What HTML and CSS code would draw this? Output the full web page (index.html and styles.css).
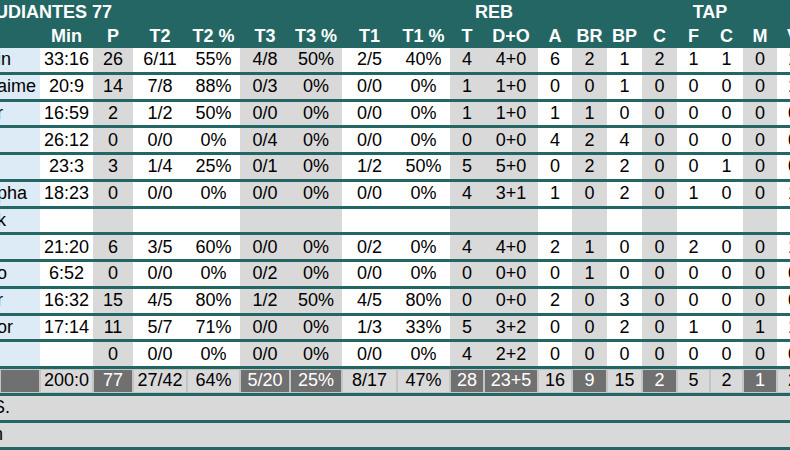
FILE: index.html
```html
<!DOCTYPE html>
<html>
<head>
<meta charset="utf-8">
<link rel="stylesheet" href="styles.css">
</head>
<body>
<div class="sheet">
  <div class="head">
    <div class="row top">
      <div class="team">ESTUDIANTES 77</div>
      <div class="grp reb">REB</div>
      <div class="grp tap">TAP</div>
    </div>
    <div class="row labels">
      <div></div><div>Min</div><div>P</div><div>T2</div><div>T2 %</div><div>T3</div><div>T3 %</div><div>T1</div><div>T1 %</div><div>T</div><div>D+O</div><div>A</div><div>BR</div><div>BP</div><div>C</div><div>F</div><div>C</div><div>M</div><div>V</div>
    </div>
  </div>

  <div class="row data"><div class="n">in</div><div>33:16</div><div>26</div><div>6/11</div><div>55%</div><div>4/8</div><div>50%</div><div>2/5</div><div>40%</div><div>4</div><div>4+0</div><div>6</div><div>2</div><div>1</div><div>2</div><div>1</div><div>1</div><div>0</div><div>1</div></div>
  <div class="row data"><div class="n">aime</div><div>20:9</div><div>14</div><div>7/8</div><div>88%</div><div>0/3</div><div>0%</div><div>0/0</div><div>0%</div><div>1</div><div>1+0</div><div>0</div><div>0</div><div>1</div><div>0</div><div>0</div><div>0</div><div>0</div><div>1</div></div>
  <div class="row data"><div class="n">r</div><div>16:59</div><div>2</div><div>1/2</div><div>50%</div><div>0/0</div><div>0%</div><div>0/0</div><div>0%</div><div>1</div><div>1+0</div><div>1</div><div>1</div><div>0</div><div>0</div><div>0</div><div>0</div><div>0</div><div>0</div></div>
  <div class="row data"><div class="n"></div><div>26:12</div><div>0</div><div>0/0</div><div>0%</div><div>0/4</div><div>0%</div><div>0/0</div><div>0%</div><div>0</div><div>0+0</div><div>4</div><div>2</div><div>4</div><div>0</div><div>0</div><div>0</div><div>0</div><div>0</div></div>
  <div class="row data"><div class="n"></div><div>23:3</div><div>3</div><div>1/4</div><div>25%</div><div>0/1</div><div>0%</div><div>1/2</div><div>50%</div><div>5</div><div>5+0</div><div>0</div><div>2</div><div>2</div><div>0</div><div>0</div><div>1</div><div>0</div><div>0</div></div>
  <div class="row data"><div class="n">pha</div><div>18:23</div><div>0</div><div>0/0</div><div>0%</div><div>0/0</div><div>0%</div><div>0/0</div><div>0%</div><div>4</div><div>3+1</div><div>1</div><div>0</div><div>2</div><div>0</div><div>1</div><div>0</div><div>0</div><div>1</div></div>
  <div class="row data"><div class="n">k</div><div></div><div></div><div></div><div></div><div></div><div></div><div></div><div></div><div></div><div></div><div></div><div></div><div></div><div></div><div></div><div></div><div></div><div></div></div>
  <div class="row data"><div class="n"></div><div>21:20</div><div>6</div><div>3/5</div><div>60%</div><div>0/0</div><div>0%</div><div>0/2</div><div>0%</div><div>4</div><div>4+0</div><div>2</div><div>1</div><div>0</div><div>0</div><div>2</div><div>0</div><div>0</div><div>1</div></div>
  <div class="row data"><div class="n">o</div><div>6:52</div><div>0</div><div>0/0</div><div>0%</div><div>0/2</div><div>0%</div><div>0/0</div><div>0%</div><div>0</div><div>0+0</div><div>0</div><div>1</div><div>0</div><div>0</div><div>0</div><div>0</div><div>0</div><div>0</div></div>
  <div class="row data"><div class="n">r</div><div>16:32</div><div>15</div><div>4/5</div><div>80%</div><div>1/2</div><div>50%</div><div>4/5</div><div>80%</div><div>0</div><div>0+0</div><div>2</div><div>0</div><div>3</div><div>0</div><div>0</div><div>0</div><div>0</div><div>0</div></div>
  <div class="row data"><div class="n">or</div><div>17:14</div><div>11</div><div>5/7</div><div>71%</div><div>0/0</div><div>0%</div><div>1/3</div><div>33%</div><div>5</div><div>3+2</div><div>0</div><div>0</div><div>2</div><div>0</div><div>1</div><div>0</div><div>1</div><div>1</div></div>
  <div class="row data"><div class="n"></div><div></div><div>0</div><div>0/0</div><div>0%</div><div>0/0</div><div>0%</div><div>0/0</div><div>0%</div><div>4</div><div>2+2</div><div>0</div><div>0</div><div>0</div><div>0</div><div>0</div><div>0</div><div>0</div><div>0</div></div>
  <div class="row data total"><div class="n"></div><div>200:0</div><div>77</div><div>27/42</div><div>64%</div><div>5/20</div><div>25%</div><div>8/17</div><div>47%</div><div>28</div><div>23+5</div><div>16</div><div>9</div><div>15</div><div>2</div><div>5</div><div>2</div><div>1</div><div>2</div></div>
  <div class="row note"><span class="cut">S.</span></div>
  <div class="row note"><span class="cut">n</span></div>
</div>
</body>
</html>
```

FILE: styles.css
```css
html, body {
  margin: 0;
  padding: 0;
  background: #ffffff;
}
body {
  width: 790px;
  height: 450px;
  overflow: hidden;
  font-family: "Liberation Sans", Arial, sans-serif;
  font-size: 18px;
  color: #000;
}
.sheet {
  width: 809px;
}
.head {
  background: #236664;
  color: #fff;
  font-weight: bold;
  height: 48px;
}
.row {
  display: grid;
  grid-template-columns: 40px 53px 40px 54px 53px 50px 52px 55px 53px 34px 54px 34px 35px 35px 35px 33px 33px 34px 32px;
}
.row > div {
  display: flex;
  align-items: center;
  justify-content: center;
  white-space: nowrap;
  overflow: hidden;
}
.top {
  height: 24px;
}
.top .team {
  grid-column: 1 / 10;
  justify-content: flex-start;
  overflow: visible;
  margin-left: -40px;
}
.top .reb {
  grid-column: 10 / 12;
}
.top .tap {
  grid-column: 16 / 18;
}
.labels {
  height: 24px;
}
.data {
  height: 23.75px;
  border-bottom: 3px solid #236664;
}
.data > div {
  background: #fff;
}
.data > div.n {
  background: #ddebf7;
  justify-content: flex-start;
  text-indent: -3px;
}
.data > div:nth-child(3),
.data > div:nth-child(6),
.data > div:nth-child(7),
.data > div:nth-child(10),
.data > div:nth-child(11),
.data > div:nth-child(13),
.data > div:nth-child(15),
.data > div:nth-child(18) {
  background: #d9d9d9;
}
.total > div,
.total > div.n {
  background: #d9d9d9;
  box-shadow: inset 0 0 0 1px #c4c4c4;
}
.total > div.n,
.total > div:nth-child(3),
.total > div:nth-child(6),
.total > div:nth-child(7),
.total > div:nth-child(10),
.total > div:nth-child(11),
.total > div:nth-child(13),
.total > div:nth-child(15),
.total > div:nth-child(18) {
  background: #707070;
  color: #fff;
}
.note {
  display: flex;
  align-items: center;
  height: 24px;
  background: #d9d9d9;
  border-bottom: 3px solid #236664;
}
.note .cut {
  margin-left: -7px;
}
```
